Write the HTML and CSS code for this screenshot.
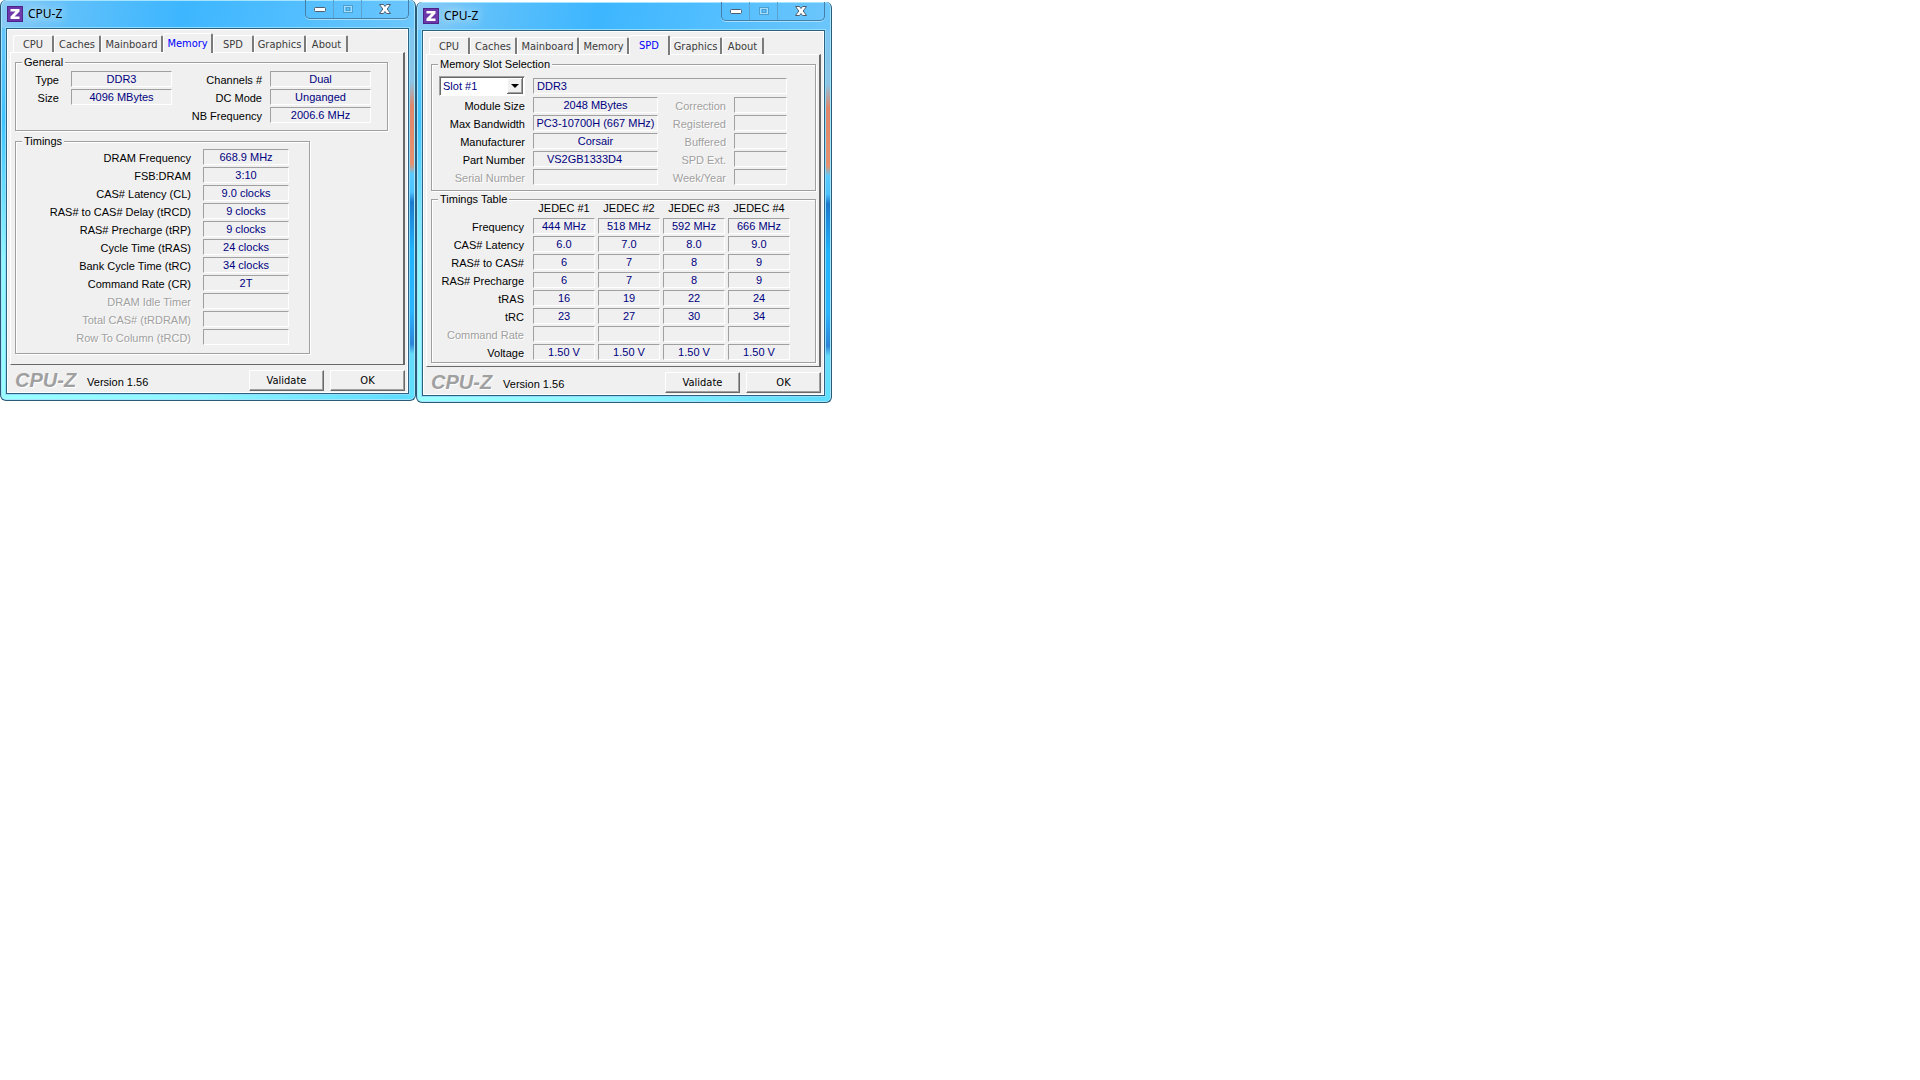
FILE: index.html
```html
<!DOCTYPE html>
<html lang="en">
<head>
<meta charset="utf-8">
<title>CPU-Z</title>
<link rel="stylesheet" href="styles.css">
</head>
<body>
<main class="desktop">

<section class="window" aria-label="CPU-Z Memory">
  <header class="titlebar">
    <svg class="app-icon" viewBox="0 0 16 16" aria-hidden="true"><rect width="16" height="16" fill="#4c2388"/><rect x="1" y="1" width="14" height="14" fill="#6c37a8"/><path d="M3.500 3h9v2.500l-5 5h5V13h-9v-2.500l5-5h-5z" fill="#fff"/></svg>
    <h1 class="title">CPU-Z</h1>
    <div class="caption-buttons">
      <button class="cap" aria-label="Minimize"><svg width="14" height="8" viewBox="0 0 14 8"><rect x="1.500" y="2.500" width="11" height="4" rx="1" fill="#fff" stroke="#4d5f70"/></svg></button>
      <button class="cap" aria-label="Maximize" disabled><svg width="12" height="10" viewBox="0 0 12 10"><rect x="1.500" y="1.500" width="9" height="7" fill="none" stroke="#4c9fce"/><rect x="2.500" y="2.500" width="7" height="5" fill="none" stroke="#a7dcfa"/><rect x="4.500" y="3.500" width="3" height="3" fill="none" stroke="#4c9fce"/></svg></button>
      <button class="cap cap-close" aria-label="Close"><svg width="14" height="12" viewBox="0 0 14 12"><path d="M1.500 1.500h4L7 3.500l1.500-2h4L9.200 6l3.300 4.500h-4L7 8.500l-1.500 2h-4L4.800 6z" fill="#fff" stroke="#4d5f70"/></svg></button>
    </div>
  </header>
  <div class="client">
    <div class="tabs" role="tablist">
      <button class="tab tab-cpu" role="tab">CPU</button>
      <button class="tab tab-caches" role="tab">Caches</button>
      <button class="tab tab-mainboard" role="tab">Mainboard</button>
      <button class="tab tab-memory active" role="tab" aria-selected="true">Memory</button>
      <button class="tab tab-spd" role="tab">SPD</button>
      <button class="tab tab-graphics" role="tab">Graphics</button>
      <button class="tab tab-about" role="tab">About</button>
    </div>
    <div class="panel" role="tabpanel">
      <fieldset class="group general">
        <legend>General</legend>
        <div class="general-grid">
          <label for="m-type" class="inset">Type</label><output id="m-type" class="field">DDR3</output>
          <label for="m-chan">Channels #</label><output id="m-chan" class="field">Dual</output>
          <label for="m-size" class="inset">Size</label><output id="m-size" class="field">4096 MBytes</output>
          <label for="m-dc">DC Mode</label><output id="m-dc" class="field">Unganged</output>
          <label for="m-nb" class="third">NB Frequency</label><output id="m-nb" class="field">2006.6 MHz</output>
        </div>
      </fieldset>
      <fieldset class="group timings">
        <legend>Timings</legend>
        <div class="timings-grid">
          <label for="t1">DRAM Frequency</label><output id="t1" class="field">668.9 MHz</output>
          <label for="t2">FSB:DRAM</label><output id="t2" class="field">3:10</output>
          <label for="t3">CAS# Latency (CL)</label><output id="t3" class="field">9.0 clocks</output>
          <label for="t4">RAS# to CAS# Delay (tRCD)</label><output id="t4" class="field">9 clocks</output>
          <label for="t5">RAS# Precharge (tRP)</label><output id="t5" class="field">9 clocks</output>
          <label for="t6">Cycle Time (tRAS)</label><output id="t6" class="field">24 clocks</output>
          <label for="t7">Bank Cycle Time (tRC)</label><output id="t7" class="field">34 clocks</output>
          <label for="t8">Command Rate (CR)</label><output id="t8" class="field">2T</output>
          <label for="t9" class="off">DRAM Idle Timer</label><output id="t9" class="field"></output>
          <label for="t10" class="off">Total CAS# (tRDRAM)</label><output id="t10" class="field"></output>
          <label for="t11" class="off">Row To Column (tRCD)</label><output id="t11" class="field"></output>
        </div>
      </fieldset>
    </div>
    <footer class="footer">
      <span class="logo">CPU-Z</span>
      <span class="version">Version 1.56</span>
      <button class="btn">Validate</button>
      <button class="btn">OK</button>
    </footer>
  </div>
</section>

<section class="window lower" aria-label="CPU-Z SPD">
  <header class="titlebar">
    <svg class="app-icon" viewBox="0 0 16 16" aria-hidden="true"><rect width="16" height="16" fill="#4c2388"/><rect x="1" y="1" width="14" height="14" fill="#6c37a8"/><path d="M3.500 3h9v2.500l-5 5h5V13h-9v-2.500l5-5h-5z" fill="#fff"/></svg>
    <h1 class="title">CPU-Z</h1>
    <div class="caption-buttons">
      <button class="cap" aria-label="Minimize"><svg width="14" height="8" viewBox="0 0 14 8"><rect x="1.500" y="2.500" width="11" height="4" rx="1" fill="#fff" stroke="#4d5f70"/></svg></button>
      <button class="cap" aria-label="Maximize" disabled><svg width="12" height="10" viewBox="0 0 12 10"><rect x="1.500" y="1.500" width="9" height="7" fill="none" stroke="#4c9fce"/><rect x="2.500" y="2.500" width="7" height="5" fill="none" stroke="#a7dcfa"/><rect x="4.500" y="3.500" width="3" height="3" fill="none" stroke="#4c9fce"/></svg></button>
      <button class="cap cap-close" aria-label="Close"><svg width="14" height="12" viewBox="0 0 14 12"><path d="M1.500 1.500h4L7 3.500l1.500-2h4L9.200 6l3.300 4.500h-4L7 8.500l-1.500 2h-4L4.800 6z" fill="#fff" stroke="#4d5f70"/></svg></button>
    </div>
  </header>
  <div class="client">
    <div class="tabs" role="tablist">
      <button class="tab tab-cpu" role="tab">CPU</button>
      <button class="tab tab-caches" role="tab">Caches</button>
      <button class="tab tab-mainboard" role="tab">Mainboard</button>
      <button class="tab tab-memory" role="tab">Memory</button>
      <button class="tab tab-spd active" role="tab" aria-selected="true">SPD</button>
      <button class="tab tab-graphics" role="tab">Graphics</button>
      <button class="tab tab-about" role="tab">About</button>
    </div>
    <div class="panel" role="tabpanel">
      <fieldset class="group">
        <legend>Memory Slot Selection</legend>
        <div class="slot-row">
          <span class="combo">
            <select aria-label="Memory slot"><option>Slot #1</option></select>
            <svg class="combo-arrow" viewBox="0 0 16 16" aria-hidden="true"><rect width="16" height="16" fill="#696969"/><rect width="15" height="15" fill="#fff"/><rect x="1" y="1" width="14" height="14" fill="#a0a0a0"/><rect x="1" y="1" width="13" height="13" fill="#f0f0f0"/><path d="M4 6h8l-4 4z" fill="#000"/></svg>
          </span>
          <output class="field start" aria-label="Memory type">DDR3</output>
        </div>
        <div class="slot-grid">
          <label for="s1">Module Size</label><output id="s1" class="field">2048 MBytes</output>
          <label for="s2" class="off">Correction</label><output id="s2" class="field"></output>
          <label for="s3">Max Bandwidth</label><output id="s3" class="field">PC3-10700H (667 MHz)</output>
          <label for="s4" class="off">Registered</label><output id="s4" class="field"></output>
          <label for="s5">Manufacturer</label><output id="s5" class="field">Corsair</output>
          <label for="s6" class="off">Buffered</label><output id="s6" class="field"></output>
          <label for="s7">Part Number</label><output id="s7" class="field part">VS2GB1333D4</output>
          <label for="s8" class="off">SPD Ext.</label><output id="s8" class="field"></output>
          <label for="s9" class="off">Serial Number</label><output id="s9" class="field"></output>
          <label for="s10" class="off">Week/Year</label><output id="s10" class="field"></output>
        </div>
      </fieldset>
      <fieldset class="group spd-timings">
        <legend>Timings Table</legend>
        <table class="spd-table">
          <thead>
            <tr><td></td><th scope="col">JEDEC #1</th><th scope="col">JEDEC #2</th><th scope="col">JEDEC #3</th><th scope="col">JEDEC #4</th></tr>
          </thead>
          <tbody>
            <tr><th scope="row">Frequency</th><td>444 MHz</td><td>518 MHz</td><td>592 MHz</td><td>666 MHz</td></tr>
            <tr><th scope="row">CAS# Latency</th><td>6.0</td><td>7.0</td><td>8.0</td><td>9.0</td></tr>
            <tr><th scope="row">RAS# to CAS#</th><td>6</td><td>7</td><td>8</td><td>9</td></tr>
            <tr><th scope="row">RAS# Precharge</th><td>6</td><td>7</td><td>8</td><td>9</td></tr>
            <tr><th scope="row">tRAS</th><td>16</td><td>19</td><td>22</td><td>24</td></tr>
            <tr><th scope="row">tRC</th><td>23</td><td>27</td><td>30</td><td>34</td></tr>
            <tr><th scope="row" class="off">Command Rate</th><td></td><td></td><td></td><td></td></tr>
            <tr><th scope="row">Voltage</th><td>1.50 V</td><td>1.50 V</td><td>1.50 V</td><td>1.50 V</td></tr>
          </tbody>
        </table>
      </fieldset>
    </div>
    <footer class="footer">
      <span class="logo">CPU-Z</span>
      <span class="version">Version 1.56</span>
      <button class="btn">Validate</button>
      <button class="btn">OK</button>
    </footer>
  </div>
</section>

</main>
</body>
</html>
```
FILE: styles.css
```css
* { box-sizing: border-box; }

body {
  margin: 0;
  background: #fff;
  color: #000;
  font: 11px/14px "Liberation Sans", Arial, sans-serif;
}

button, select { font: inherit; color: inherit; margin: 0; }

.desktop {
  display: flex;
  align-items: flex-start;
}

/* Aero glass frame */
.window {
  width: 416px;
  padding: 0 6px 6px 5px;
  border: 1px solid #2a5b77;
  border-top: 0;
  border-radius: 6px;
  box-shadow: inset 0 0 0 1px #a5e4ff;
  background:
    linear-gradient(100deg, #8ecbf5 0, #5fc0fa 70px, #3db6ff 180px, #4fbdff 280px, #6cc6fb 100%) 0 0 / 100% 28px no-repeat,
    linear-gradient(90deg, #9ff 0, #8ff6ff 50%, #5cdcff 100%) 0 100% / 407px 8px no-repeat,
    linear-gradient(#74c6fa 0, #8cc4e4 82px, #e0876a 106px, #e5916f 164px, #58cbff 174px, #4cc4ff 192px, #1c78cc 202px, #1fb4fc 250px, #2ab6ff 310px, #2c84d8 344px, #63dcfa 354px, #5ce0ff 100%) 100% 0 / 9px 100% no-repeat,
    linear-gradient(#72c5f8 0, #3fc4ff 120px, #8ff8ff 260px, #9ff 100%);
}

.lower { margin-top: 2px; }

.titlebar {
  display: flex;
  height: 28px;
  align-items: flex-start;
}

.app-icon { width: 16px; height: 16px; margin: 6px 0 0 1px; }

.title {
  flex: 1;
  margin: 5px 0 0 5px;
  font: 12px/18px "Noto Sans", sans-serif;
  text-shadow: 0 0 8px #d9f1ff, 0 0 8px #b9e6ff;
}

.caption-buttons {
  display: flex;
  height: 19px;
  border: 1px solid #437fa8;
  border-top: 0;
  border-radius: 0 0 5px 5px;
  box-shadow: 0 1px 0 #a5e0ff;
}

.cap {
  display: flex;
  width: 28px;
  padding: 0;
  align-items: center;
  justify-content: center;
  border: 0;
  border-right: 1px solid #5ba3ce;
  background: none;
}

.cap-close { width: 46px; border-right: 0; }

.client {
  padding: 3px 3px 1px 3px;
  border: 1px solid #2d6180;
  outline: 1px solid #8fdcfb;
  box-shadow: inset 0 0 0 1px #fff;
  background: #f0f0f0;
}

.tabs {
  display: flex;
  align-items: flex-end;
  height: 20px;
  padding: 1px 0 0 3px;
}

.tab {
  height: 17px;
  padding: 0;
  border: 1px solid #fff;
  border-right: 2px solid #7b7b7b;
  border-bottom: 0;
  border-radius: 3px 2px 0 0;
  background: #f0f0f0;
  color: #3c3c3c;
  font: 11px/15px "DejaVu Sans Condensed", "DejaVu Sans", Tahoma, sans-serif;
  text-align: center;
}

.tab-cpu { width: 41px; }
.tab-caches { width: 47px; }
.tab-mainboard { width: 62px; }
.tab-memory { width: 50px; }
.tab-spd { width: 41px; }
.tab-graphics { width: 52px; }
.tab-about { width: 42px; }

.tab.active {
  position: relative;
  height: 20px;
  margin-bottom: -1px;
  color: #00f;
}

.panel {
  display: flex;
  flex-direction: column;
  min-height: 313px;
  padding: 2px 3px 2px 4px;
  gap: 3px;
  border: 1px solid #fff;
  border-right: 2px solid #696969;
  border-bottom-color: #696969;
}

.group {
  min-width: 0;
  margin: 0;
  padding: 1px 0 7px;
  border: 1px solid #a0a0a0;
  box-shadow: 1px 1px 0 #fff, inset 1px 1px 0 #fff;
}

.group legend {
  height: 14px;
  margin-left: 6px;
  padding: 0 2px;
  background: #f0f0f0;
}

.lower .group { padding-bottom: 5px; }
.lower .spd-timings { padding-bottom: 0; }
.lower .panel { gap: 1px; }
.general { width: 373px; }
.timings { width: 295px; padding-bottom: 8px; }

label, .off { text-align: right; }
label { padding-top: 2px; }

.off {
  color: #a0a0a0;
  text-shadow: 1px 1px 0 #fff;
}

.field, .spd-table tbody td {
  height: 16px;
  border: 1px solid #a0a0a0;
  border-right-color: #fff;
  border-bottom-color: #fff;
  color: #000080;
  line-height: 14px;
  text-align: center;
  white-space: nowrap;
}

.general-grid, .timings-grid, .slot-grid {
  display: grid;
  grid-auto-rows: 16px;
  row-gap: 2px;
}

.general-grid {
  grid-template-columns: 47px 101px 82px 101px;
  column-gap: 8px;
  padding-top: 1px;
}

.inset { padding-right: 4px; }
.third { grid-column: 3; }

.timings-grid {
  grid-template-columns: 175px 86px;
  column-gap: 12px;
}

.slot-row {
  display: flex;
  align-items: center;
  height: 21px;
  margin: 3px 0 1px 7px;
  gap: 8px;
}

.slot-row .field { width: 254px; }
.start { padding-left: 3px; text-align: left; }

.combo { position: relative; width: 86px; height: 20px; }

.combo select {
  width: 100%;
  height: 100%;
  padding: 0 20px 0 3px;
  appearance: none;
  border: 1px solid #a0a0a0;
  border-right-color: #fff;
  border-bottom-color: #fff;
  border-radius: 0;
  box-shadow: inset 1px 1px 0 #696969;
  background: #fff;
  color: #000080;
}

.combo-arrow {
  position: absolute;
  top: 2px;
  right: 2px;
  width: 16px;
  height: 16px;
  pointer-events: none;
}

.slot-grid {
  grid-template-columns: 93px 125px 60px 53px;
  column-gap: 8px;
}

.part { padding-right: 22px; }

.spd-timings legend { margin-bottom: -9px; }

.spd-table {
  width: 361px;
  table-layout: fixed;
  border-spacing: 3px 2px;
}

.spd-table th, .spd-table td { height: 16px; padding: 0; font-weight: normal; }
.spd-table thead th { line-height: 16px; }
.spd-table thead td { width: 95px; }
.spd-table tbody th { padding: 1px 6px 0 0; text-align: right; line-height: 14px; }

.footer {
  display: flex;
  align-items: flex-start;
  gap: 6px;
  padding: 5px 0 1px 5px;
}

.logo {
  color: #a0a0a0;
  font: italic bold 20px/21px "Liberation Sans", Arial, sans-serif;
  text-shadow: 1px 1px 0 #fff;
}

.version { flex: 1; padding: 5px 0 0 5px; }

.btn {
  width: 75px;
  height: 21px;
  padding: 0;
  border: 1px solid #fff;
  border-right-color: #696969;
  border-bottom-color: #696969;
  box-shadow: inset -1px -1px 0 #a0a0a0;
  background: #f0f0f0;
  font: 11px/17px "DejaVu Sans Condensed", "DejaVu Sans", Tahoma, sans-serif;
}
```
